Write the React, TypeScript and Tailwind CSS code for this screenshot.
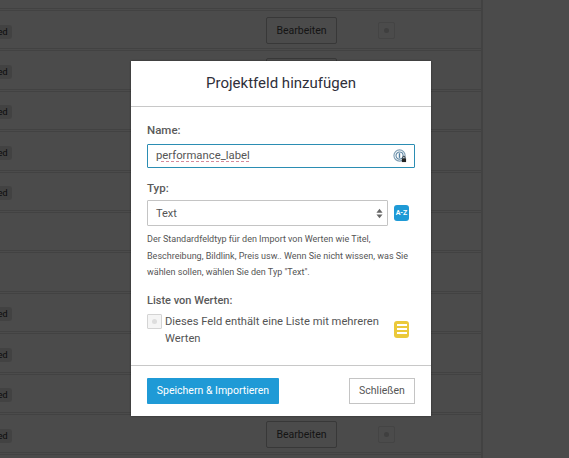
const rows = [true, true, true, true, true, false, false, true, true, true, true];

function TableRow({ published }: { published: boolean }) {
  return (
    <div className="flex h-[40.4px] items-center border-b-[3px] border-double border-[#424242]">
      <div className="w-[266px] shrink-0 overflow-hidden">
        {published && (
          <span className="-ml-[36px] inline-block rounded-[3px] bg-[#424242] px-[4px] py-[1px] text-[9px] leading-[12px] text-[#0c0c0c]">
            Published
          </span>
        )}
      </div>
      <div className="mt-[2px] flex h-[27px] w-[71px] shrink-0 items-center justify-center rounded-[2px] border border-[#383838] text-[10.5px] text-[#141414]">
        Bearbeiten
      </div>
      <div className="ml-[41px] mt-[2px] flex h-[17px] w-[17px] items-center justify-center rounded-[2px] border border-[#444444]">
        <div className="h-[5px] w-[5px] rounded-full bg-[#3f3f3f]" />
      </div>
    </div>
  );
}

function PasswordIcon() {
  return (
    <svg width="14" height="14" viewBox="0 0 15 15" fill="none">
      <circle cx="7" cy="7" r="6" stroke="#7f9fb5" strokeWidth="1.2" />
      <circle cx="7" cy="7" r="3.8" stroke="#5f88a5" strokeWidth="1.2" />
      <rect x="6.2" y="4.5" width="1.5" height="5" fill="#4f7ea0" />
      <rect x="9.5" y="10" width="4.5" height="4" fill="#222222" />
      <path d="M10.5 10V9a1.3 1.3 0 0 1 2.6 0v1" stroke="#222222" strokeWidth="0.8" />
    </svg>
  );
}

function SelectArrows() {
  return (
    <svg width="7" height="11" viewBox="0 0 8 12" fill="#666666">
      <path d="M4 0.5 7.5 5H0.5Z" />
      <path d="M4 11.5 0.5 7H7.5Z" />
    </svg>
  );
}

function ListIcon() {
  return (
    <div className="flex h-[17px] w-[15px] flex-col items-center justify-center gap-[2px] rounded-[3px] bg-[#ebc93a]">
      <div className="h-[2px] w-[10px] bg-white" />
      <div className="h-[2px] w-[10px] bg-white" />
      <div className="h-[2px] w-[10px] bg-white" />
    </div>
  );
}

export default function App() {
  return (
    <div className="relative h-[458px] w-[569px] overflow-hidden bg-[#4b4b4b] font-['Roboto',sans-serif]">
      {/* table behind the overlay */}
      <div className="h-full w-[483px] border-r-[2px] border-[#424242]">
        <div className="h-[11px] border-b-[3px] border-double border-[#424242]" />
        {rows.map((published, i) => (
          <TableRow key={i} published={published} />
        ))}
      </div>

      <div className="absolute left-[131px] top-[61px] w-[300px] bg-white shadow-[0_0_2px_rgba(0,0,0,0.4)]">
        <div className="flex h-[46px] items-center justify-center border-b border-[#c8c8c8] text-[15px] text-[#2f2f3a]">
          Projektfeld hinzufügen
        </div>

        <div className="h-[258px] px-[16px] pt-[15px]">
          <label className="block text-[11.5px] font-medium leading-[16px] text-[#5a5a5a]">Name:</label>
          <div className="mt-[6px] flex h-[24px] items-center justify-between rounded-[1px] border border-[#2b8db3] pl-[8px] pr-[7px]">
            <input
              readOnly
              value="performance_label"
              className="mt-[1px] w-[200px] bg-transparent text-[11.3px] text-[#555555] underline decoration-[#d98a9a] decoration-dashed underline-offset-2 outline-none"
            />
            <PasswordIcon />
          </div>

          <label className="mt-[12px] block text-[11.5px] font-medium leading-[16px] text-[#5a5a5a]">Typ:</label>
          <div className="mt-[4px] flex items-center">
            <div className="flex h-[26px] w-[241px] items-center justify-between rounded-[1px] border border-[#c4c4c4] pl-[8px] pr-[4px] text-[11px] text-[#555555]">
              <span className="mt-[2px]">Text</span>
              <SelectArrows />
            </div>
            <div className="ml-[6px] flex h-[16px] w-[15px] items-center justify-center rounded-[3px] bg-[#1f9ad6] text-[7px] font-bold text-white">
              A-Z
            </div>
          </div>
          <p className="mt-[5px] text-[9px] leading-[16.5px] text-[#555555]">
            Der Standardfeldtyp für den Import von Werten wie Titel, Beschreibung, Bildlink, Preis usw.. Wenn Sie nicht wissen, was Sie wählen sollen, wählen Sie den Typ "Text".
          </p>

          <label className="mt-[12px] block text-[11px] font-medium leading-[16px] text-[#5a5a5a]">Liste von Werten:</label>
          <div className="mt-[4px] flex items-start">
            <div className="mt-[1px] flex h-[15px] w-[15px] shrink-0 items-center justify-center rounded-[1px] border border-[#d4d4d4] bg-[#f5f5f5]">
              <div className="h-[5px] w-[5px] rounded-full bg-[#dddddd]" />
            </div>
            <div className="ml-[3px] w-[224px] text-[11.2px] leading-[17px] text-[#555555]">
              Dieses Feld enthält eine Liste mit mehreren Werten
            </div>
            <div className="ml-[5px] mt-[8px]">
              <ListIcon />
            </div>
          </div>
        </div>

        <div className="flex h-[51px] items-center justify-between border-t border-[#c8c8c8] px-[16px]">
          <button className="h-[26px] w-[132px] rounded-[1px] bg-[#1f9ad6] text-[10.5px] font-normal text-white">
            Speichern &amp; Importieren
          </button>
          <button className="h-[26px] w-[66px] border border-[#c4c4c4] text-[10.5px] text-[#555555]">
            Schließen
          </button>
        </div>
      </div>
    </div>
  );
}
